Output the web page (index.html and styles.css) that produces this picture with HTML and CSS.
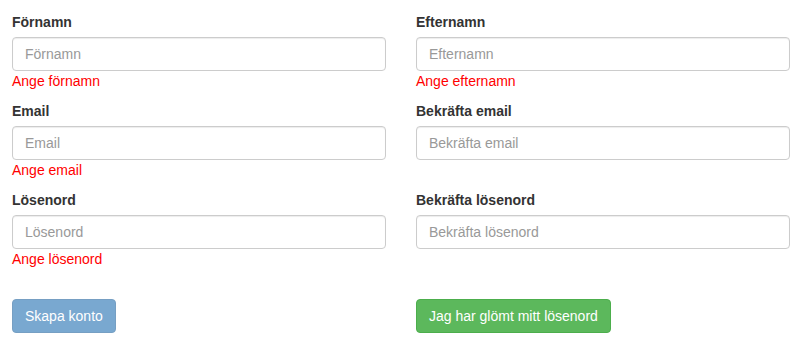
FILE: index.html
```html
<!DOCTYPE html>
<html lang="sv">
<head>
<meta charset="UTF-8">
<meta name="viewport" content="width=device-width, initial-scale=1.0">
<title>Skapa konto</title>
<link rel="stylesheet" href="styles.css">
</head>
<body>

<!-- Registreringsformulär -->
<form class="signup">
    <div class="form-group">
        <label for="firstName">Förnamn</label>
        <input type="text" id="firstName" class="form-control" placeholder="Förnamn">
        <span class="help-block">Ange förnamn</span>
    </div>
    <div class="form-group">
        <label for="lastName">Efternamn</label>
        <input type="text" id="lastName" class="form-control" placeholder="Efternamn">
        <span class="help-block">Ange efternamn</span>
    </div>
    <div class="form-group">
        <label for="email">Email</label>
        <input type="email" id="email" class="form-control" placeholder="Email">
        <span class="help-block">Ange email</span>
    </div>
    <div class="form-group">
        <label for="emailConfirm">Bekräfta email</label>
        <input type="email" id="emailConfirm" class="form-control" placeholder="Bekräfta email">
    </div>
    <div class="form-group">
        <label for="password">Lösenord</label>
        <input type="password" id="password" class="form-control" placeholder="Lösenord">
        <span class="help-block">Ange lösenord</span>
    </div>
    <div class="form-group">
        <label for="passwordConfirm">Bekräfta lösenord</label>
        <input type="password" id="passwordConfirm" class="form-control" placeholder="Bekräfta lösenord">
    </div>
    <div class="actions">
        <button type="submit" class="btn btn-primary" disabled>Skapa konto</button>
    </div>
    <div class="actions">
        <button type="button" class="btn btn-success">Jag har glömt mitt lösenord</button>
    </div>
</form>

</body>
</html>
```

FILE: styles.css
```css
body {
    font-family: "Liberation Sans", Arial, sans-serif;
    font-size: 14px;
    line-height: 20px;
    color: #333;
    margin: 0;
    padding: 12px 9px 0 12px;
}
.signup {
    display: grid;
    grid-template-columns: 374px 374px;
    column-gap: 30px;
}
.form-group {
    display: flex;
    flex-direction: column;
    height: 79px;
    margin-bottom: 10px;
}
label {
    font-weight: bold;
    margin-bottom: 5px;
}
.form-control {
    height: 34px;
    padding: 6px 12px;
    font-family: inherit;
    font-size: 14px;
    color: #555;
    border: 1px solid #ccc;
    border-radius: 4px;
    box-sizing: border-box;
    box-shadow: inset 0 1px 1px rgba(0, 0, 0, .075);
}
.form-control::placeholder {
    color: #999;
}
.help-block {
    color: #f00;
}
.actions {
    padding-top: 20px;
}
.btn {
    height: 34px;
    padding: 6px 12px;
    font-family: inherit;
    font-size: 14px;
    line-height: 20px;
    color: #fff;
    border: 1px solid transparent;
    border-radius: 4px;
    cursor: pointer;
}
.btn-primary {
    background-color: #337ab7;
    border-color: #2e6da4;
}
.btn-primary:disabled {
    opacity: .65;
    cursor: not-allowed;
}
.btn-success {
    background-color: #5cb85c;
    border-color: #4cae4c;
}
.btn-success:hover {
    background-color: #449d44;
}
```
